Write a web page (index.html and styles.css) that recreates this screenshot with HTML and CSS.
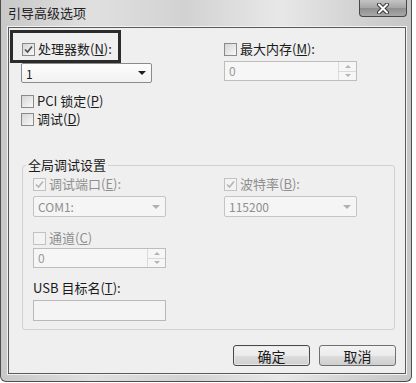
FILE: index.html
```html
<!DOCTYPE html>
<html lang="zh-CN">
<head>
    <meta charset="UTF-8">
    <title>引导高级选项</title>
    <link rel="stylesheet" href="styles.css">
</head>
<body>
    <div class="window">
        <div class="titlebar">
            <span class="title">引导高级选项</span>
            <button class="close" type="button">
                <svg width="14" height="11" viewBox="0 0 14 11">
                    <path d="M3 1.5 L11 9.5 M11 1.5 L3 9.5" stroke="#3a3a3a" stroke-width="4" stroke-linecap="round"/>
                    <path d="M3 1.5 L11 9.5 M11 1.5 L3 9.5" stroke="#ffffff" stroke-width="2" stroke-linecap="round"/>
                </svg>
            </button>
        </div>

        <div class="client">
            <div class="top">
                <div class="col">
                    <div class="mark">
                        <label class="check">
                            <span class="cb"><svg width="9" height="9" viewBox="0 0 9 9"><path d="M1 4.5 L3.5 7 L8 1.5" fill="none" stroke="#4a4a4a" stroke-width="1.6"/></svg></span>
                            处理器数(<u>N</u>):
                        </label>
                    </div>
                    <div class="combo">
                        <span class="val">1</span>
                        <span class="arrow"></span>
                    </div>
                </div>
                <div class="col right">
                    <label class="check">
                        <span class="cb"></span>
                        最大内存(<u>M</u>):
                    </label>
                    <div class="spin">
                        <span class="val">0</span>
                        <span class="btns">
                            <span class="up"></span>
                            <span class="down"></span>
                        </span>
                    </div>
                </div>
            </div>

            <div class="opts">
                <label class="check"><span class="cb"></span>PCI 锁定(<u>P</u>)</label>
                <label class="check"><span class="cb"></span>调试(<u>D</u>)</label>
            </div>

            <fieldset class="group">
                <legend>全局调试设置</legend>
                <div class="group-grid">
                    <label class="check disabled">
                        <span class="cb"><svg width="9" height="9" viewBox="0 0 9 9"><path d="M1 4.5 L3.5 7 L8 1.5" fill="none" stroke="#b4b4b4" stroke-width="1.6"/></svg></span>
                        调试端口(<u>E</u>):
                    </label>
                    <label class="check disabled">
                        <span class="cb"><svg width="9" height="9" viewBox="0 0 9 9"><path d="M1 4.5 L3.5 7 L8 1.5" fill="none" stroke="#b4b4b4" stroke-width="1.6"/></svg></span>
                        波特率(<u>B</u>):
                    </label>
                    <div class="combo disabled">
                        <span class="val">COM1:</span>
                        <span class="arrow"></span>
                    </div>
                    <div class="combo disabled">
                        <span class="val">115200</span>
                        <span class="arrow"></span>
                    </div>
                </div>

                <label class="check disabled channel"><span class="cb"></span>通道(<u>C</u>)</label>
                <div class="spin small">
                    <span class="val">0</span>
                    <span class="btns">
                        <span class="up"></span>
                        <span class="down"></span>
                    </span>
                </div>

                <label class="field-label">USB 目标名(<u>T</u>):</label>
                <div class="textbox"></div>
            </fieldset>

            <div class="buttons">
                <button class="btn default" type="button">确定</button>
                <button class="btn" type="button">取消</button>
            </div>
        </div>
    </div>
</body>
</html>
```

FILE: styles.css
```css
:root {
    --client-bg: #efefef;
    --text-color: #1b1b1b;
    --disabled-text: #8f8f8f;
    --frame-line: #4e4e4e;
}

body {
    margin: 0;
    background: #ffffff;
    font-family: "Noto Sans CJK SC", "Noto Sans", sans-serif;
    font-size: 13px;
    color: var(--text-color);
}

.window {
    width: 412px;
    height: 382px;
    box-sizing: border-box;
    border: 1px solid var(--frame-line);
    border-top: none;
    border-radius: 0 0 6px 6px;
    background: linear-gradient(90deg, #c8c8c8 0%, #e0e0e0 22%, #d2d2d2 45%, #e8e8e8 68%, #d4d4d4 85%, #c6c6c6 100%);
}

.titlebar {
    height: 27px;
    display: flex;
    justify-content: space-between;
    align-items: flex-start;
}

.title {
    margin: 5px 0 0 7px;
    line-height: 16px;
    color: #222222;
}

.close {
    width: 48px;
    height: 17px;
    margin-right: 4px;
    padding: 0;
    border: 1px solid #474747;
    border-top: none;
    border-radius: 0 0 4px 4px;
    background: linear-gradient(#c4c4c4 0%, #a5a5a5 50%, #8e8e8e 51%, #a8a8a8 100%);
    display: flex;
    align-items: center;
    justify-content: center;
}

.client {
    margin: 0 5px 0 7px;
    height: 347px;
    box-sizing: border-box;
    border: 1px solid #5a5a5a;
    background: var(--client-bg);
    padding: 2px 9px 0 12px;
    box-shadow: 0 0 0 1px #f2f2f2;
}

.top {
    display: grid;
    grid-template-columns: 203px 133px;
}

.col {
    display: flex;
    flex-direction: column;
}

.col.right {
    padding-top: 11px;
    gap: 4px;
}

.mark {
    width: 111px;
    margin-left: -11px;
    box-sizing: border-box;
    border: 3px solid #2b2b2b;
    padding: 8px 0 3px 9px;
}

.check {
    display: flex;
    align-items: center;
    height: 16px;
    line-height: 16px;
    white-space: nowrap;
}

.check.disabled {
    color: var(--disabled-text);
}

.cb {
    flex: none;
    width: 11px;
    height: 11px;
    margin-right: 3px;
    border: 1px solid #8a8a8a;
    background: linear-gradient(135deg, #d6d6d6, #f8f8f8);
    display: flex;
    align-items: center;
    justify-content: center;
}

.disabled .cb {
    border-color: #c2c2c2;
    background: #f3f3f3;
}

.combo {
    width: 131px;
    height: 20px;
    box-sizing: border-box;
    border: 1px solid #8b8b8b;
    border-radius: 2px;
    background: linear-gradient(#fdfdfd, #f1f1f1);
    display: flex;
    align-items: center;
    justify-content: space-between;
    padding: 0 5px 0 4px;
    font-size: 12px;
}

.combo .arrow {
    width: 0;
    height: 0;
    border-left: 4px solid transparent;
    border-right: 4px solid transparent;
    border-top: 4px solid #1e1e1e;
}

.combo.disabled {
    width: 133px;
    height: 21px;
    border-color: #c4c4c4;
    background: #f5f5f5;
    color: var(--disabled-text);
}

.combo.disabled .arrow {
    border-top-color: #b0b0b0;
}

.spin {
    width: 133px;
    height: 20px;
    box-sizing: border-box;
    border: 1px solid #bdbdbd;
    background: #f6f6f6;
    color: #9a9a9a;
    display: flex;
    font-size: 12px;
}

.spin .val {
    flex: 1;
    padding-left: 4px;
    line-height: 18px;
}

.spin .btns {
    width: 17px;
    display: flex;
    flex-direction: column;
    border-left: 1px solid #dadada;
}

.spin .up,
.spin .down {
    flex: 1;
    display: flex;
    align-items: center;
    justify-content: center;
}

.spin .up {
    border-bottom: 1px solid #dadada;
}

.spin .up::before,
.spin .down::before {
    content: "";
    border-left: 3px solid transparent;
    border-right: 3px solid transparent;
}

.spin .up::before {
    border-bottom: 3px solid #b4b4b4;
}

.spin .down::before {
    border-top: 3px solid #b4b4b4;
}

.opts {
    margin-top: 9px;
}

.opts .check {
    height: 18px;
}

.group {
    margin: 29px 0 0 1px;
    width: 373px;
    min-width: 0;
    box-sizing: border-box;
    border: 1px solid #d0d0d0;
    border-radius: 3px;
    padding: 2px 10px 8px;
}

.group legend {
    padding: 0 2px;
    margin-left: -7px;
    line-height: 16px;
}

.group-grid {
    display: grid;
    grid-template-columns: 133px 133px;
    column-gap: 58px;
    row-gap: 3px;
}

.group-grid .check {
    height: 18px;
}

.channel {
    margin-top: 12px;
    height: 18px;
}

.spin.small {
    margin-top: 1px;
}

.field-label {
    display: block;
    margin-top: 12px;
    line-height: 16px;
}

.textbox {
    width: 133px;
    height: 21px;
    margin-top: 4px;
    box-sizing: border-box;
    border: 1px solid #b9b9b9;
    background: #f4f4f4;
}

.buttons {
    display: flex;
    justify-content: flex-end;
    gap: 9px;
    margin-top: 15px;
}

.btn {
    width: 77px;
    height: 21px;
    padding: 0;
    border: 1px solid #707070;
    border-radius: 3px;
    background: linear-gradient(#f3f3f3 0%, #ebebeb 50%, #dddddd 51%, #cfcfcf 100%);
    font-family: inherit;
    font-size: 14px;
    line-height: 18px;
    color: var(--text-color);
}

.btn.default {
    border-color: #4a4a4a;
    box-shadow: inset 0 0 0 1px #e8e8e8;
}
```
